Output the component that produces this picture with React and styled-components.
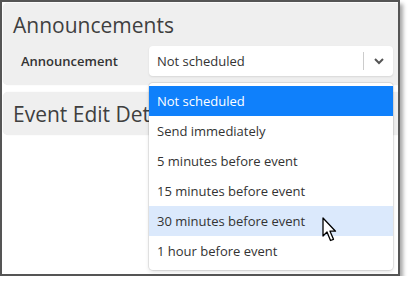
import React from 'react';
import styled, { createGlobalStyle } from 'styled-components';

const GlobalStyle = createGlobalStyle`
  html, body {
    margin: 0;
    padding: 0;
    background: #fff;
  }
  body {
    font-family: "Open Sans", "Liberation Sans", sans-serif;
  }
`;

const Frame = styled.div`
  position: relative;
  width: 396px;
  height: 272px;
  border: 2px solid #555;
  background: #fff;
  overflow: hidden;
  box-shadow: 3px 4px 4px rgba(0, 0, 0, 0.35);
`;

const Content = styled.div`
  display: flex;
  flex-direction: column;
  gap: 7px;
  padding: 1px 0 0 1px;
`;

const Panel = styled.section`
  background: #efefef;
  border-radius: 5px;
  margin-right: -10px;
  padding: ${p => (p.$open ? '8px 10px 9px 10px' : '8px 10px 7px 10px')};
  box-shadow: 0 0 1px rgba(0, 0, 0, 0.12);
`;

const Heading = styled.h2`
  margin: 0;
  font-size: 21px;
  font-weight: 400;
  line-height: 28px;
  color: #3f3f3f;
`;

const FieldRow = styled.div`
  display: flex;
  align-items: center;
  margin-top: 7px;
`;

const Label = styled.label`
  width: 128px;
  padding-left: 8px;
  font-size: 13px;
  font-weight: 600;
  color: #333;
`;

const SelectWrap = styled.div`
  position: relative;
  width: 244px;
`;

const Select = styled.div`
  display: flex;
  align-items: center;
  height: 30px;
  background: #fff;
  border-radius: 4px;
  box-shadow: 0 1px 2px rgba(0, 0, 0, 0.1);
`;

const Value = styled.span`
  flex: 1;
  padding-left: 8px;
  font-size: 13px;
  color: #333;
`;

const Divider = styled.span`
  width: 1px;
  height: 18px;
  background: #ccc;
`;

const Indicator = styled.span`
  display: flex;
  align-items: center;
  justify-content: center;
  width: 29px;
  color: #555;
`;

const Menu = styled.ul`
  position: absolute;
  top: 37px;
  left: 0;
  right: 0;
  margin: 0;
  padding: 3px 0 4px;
  list-style: none;
  background: #fff;
  border-radius: 4px;
  box-shadow: 0 0 0 1px rgba(0, 0, 0, 0.08), 0 2px 4px rgba(0, 0, 0, 0.12);
  z-index: 2;
`;

const Option = styled.li`
  position: relative;
  height: 30px;
  line-height: 30px;
  padding-left: 8px;
  font-size: 13px;
  color: ${p => (p.$selected ? '#fff' : '#333')};
  background: ${p => (p.$selected ? '#0f80fb' : p.$hover ? '#dbe9fc' : 'transparent')};
`;

const Cursor = styled.svg`
  position: absolute;
  left: 173px;
  top: 11px;
`;

const options = [
  'Not scheduled',
  'Send immediately',
  '5 minutes before event',
  '15 minutes before event',
  '30 minutes before event',
  '1 hour before event',
];

export default function App() {
  return (
    <>
      <GlobalStyle />
      <Frame>
        <Content>
          <Panel $open>
            <Heading>Announcements</Heading>
            <FieldRow>
              <Label>Announcement</Label>
              <SelectWrap>
                <Select>
                  <Value>Not scheduled</Value>
                  <Divider />
                  <Indicator>
                    <svg width="12" height="8" viewBox="0 0 12 8">
                      <path d="M2 2l4 4 4-4" fill="none" stroke="#555" strokeWidth="2" />
                    </svg>
                  </Indicator>
                </Select>
                <Menu>
                  {options.map((o, i) => (
                    <Option key={o} $selected={i === 0} $hover={i === 4}>
                      {o}
                      {i === 4 && (
                        <Cursor width="15" height="26" viewBox="0 0 15 26">
                          <path
                            d="M1 1 L1 19 L5 15 L8.5 23.5 L11.5 22.3 L8 14.2 L13.5 14.2 Z"
                            fill="#fff"
                            stroke="#000"
                            strokeWidth="1.3"
                            strokeLinejoin="round"
                          />
                        </Cursor>
                      )}
                    </Option>
                  ))}
                </Menu>
              </SelectWrap>
            </FieldRow>
          </Panel>
          <Panel>
            <Heading>Event Edit Details</Heading>
          </Panel>
        </Content>
      </Frame>
    </>
  );
}
